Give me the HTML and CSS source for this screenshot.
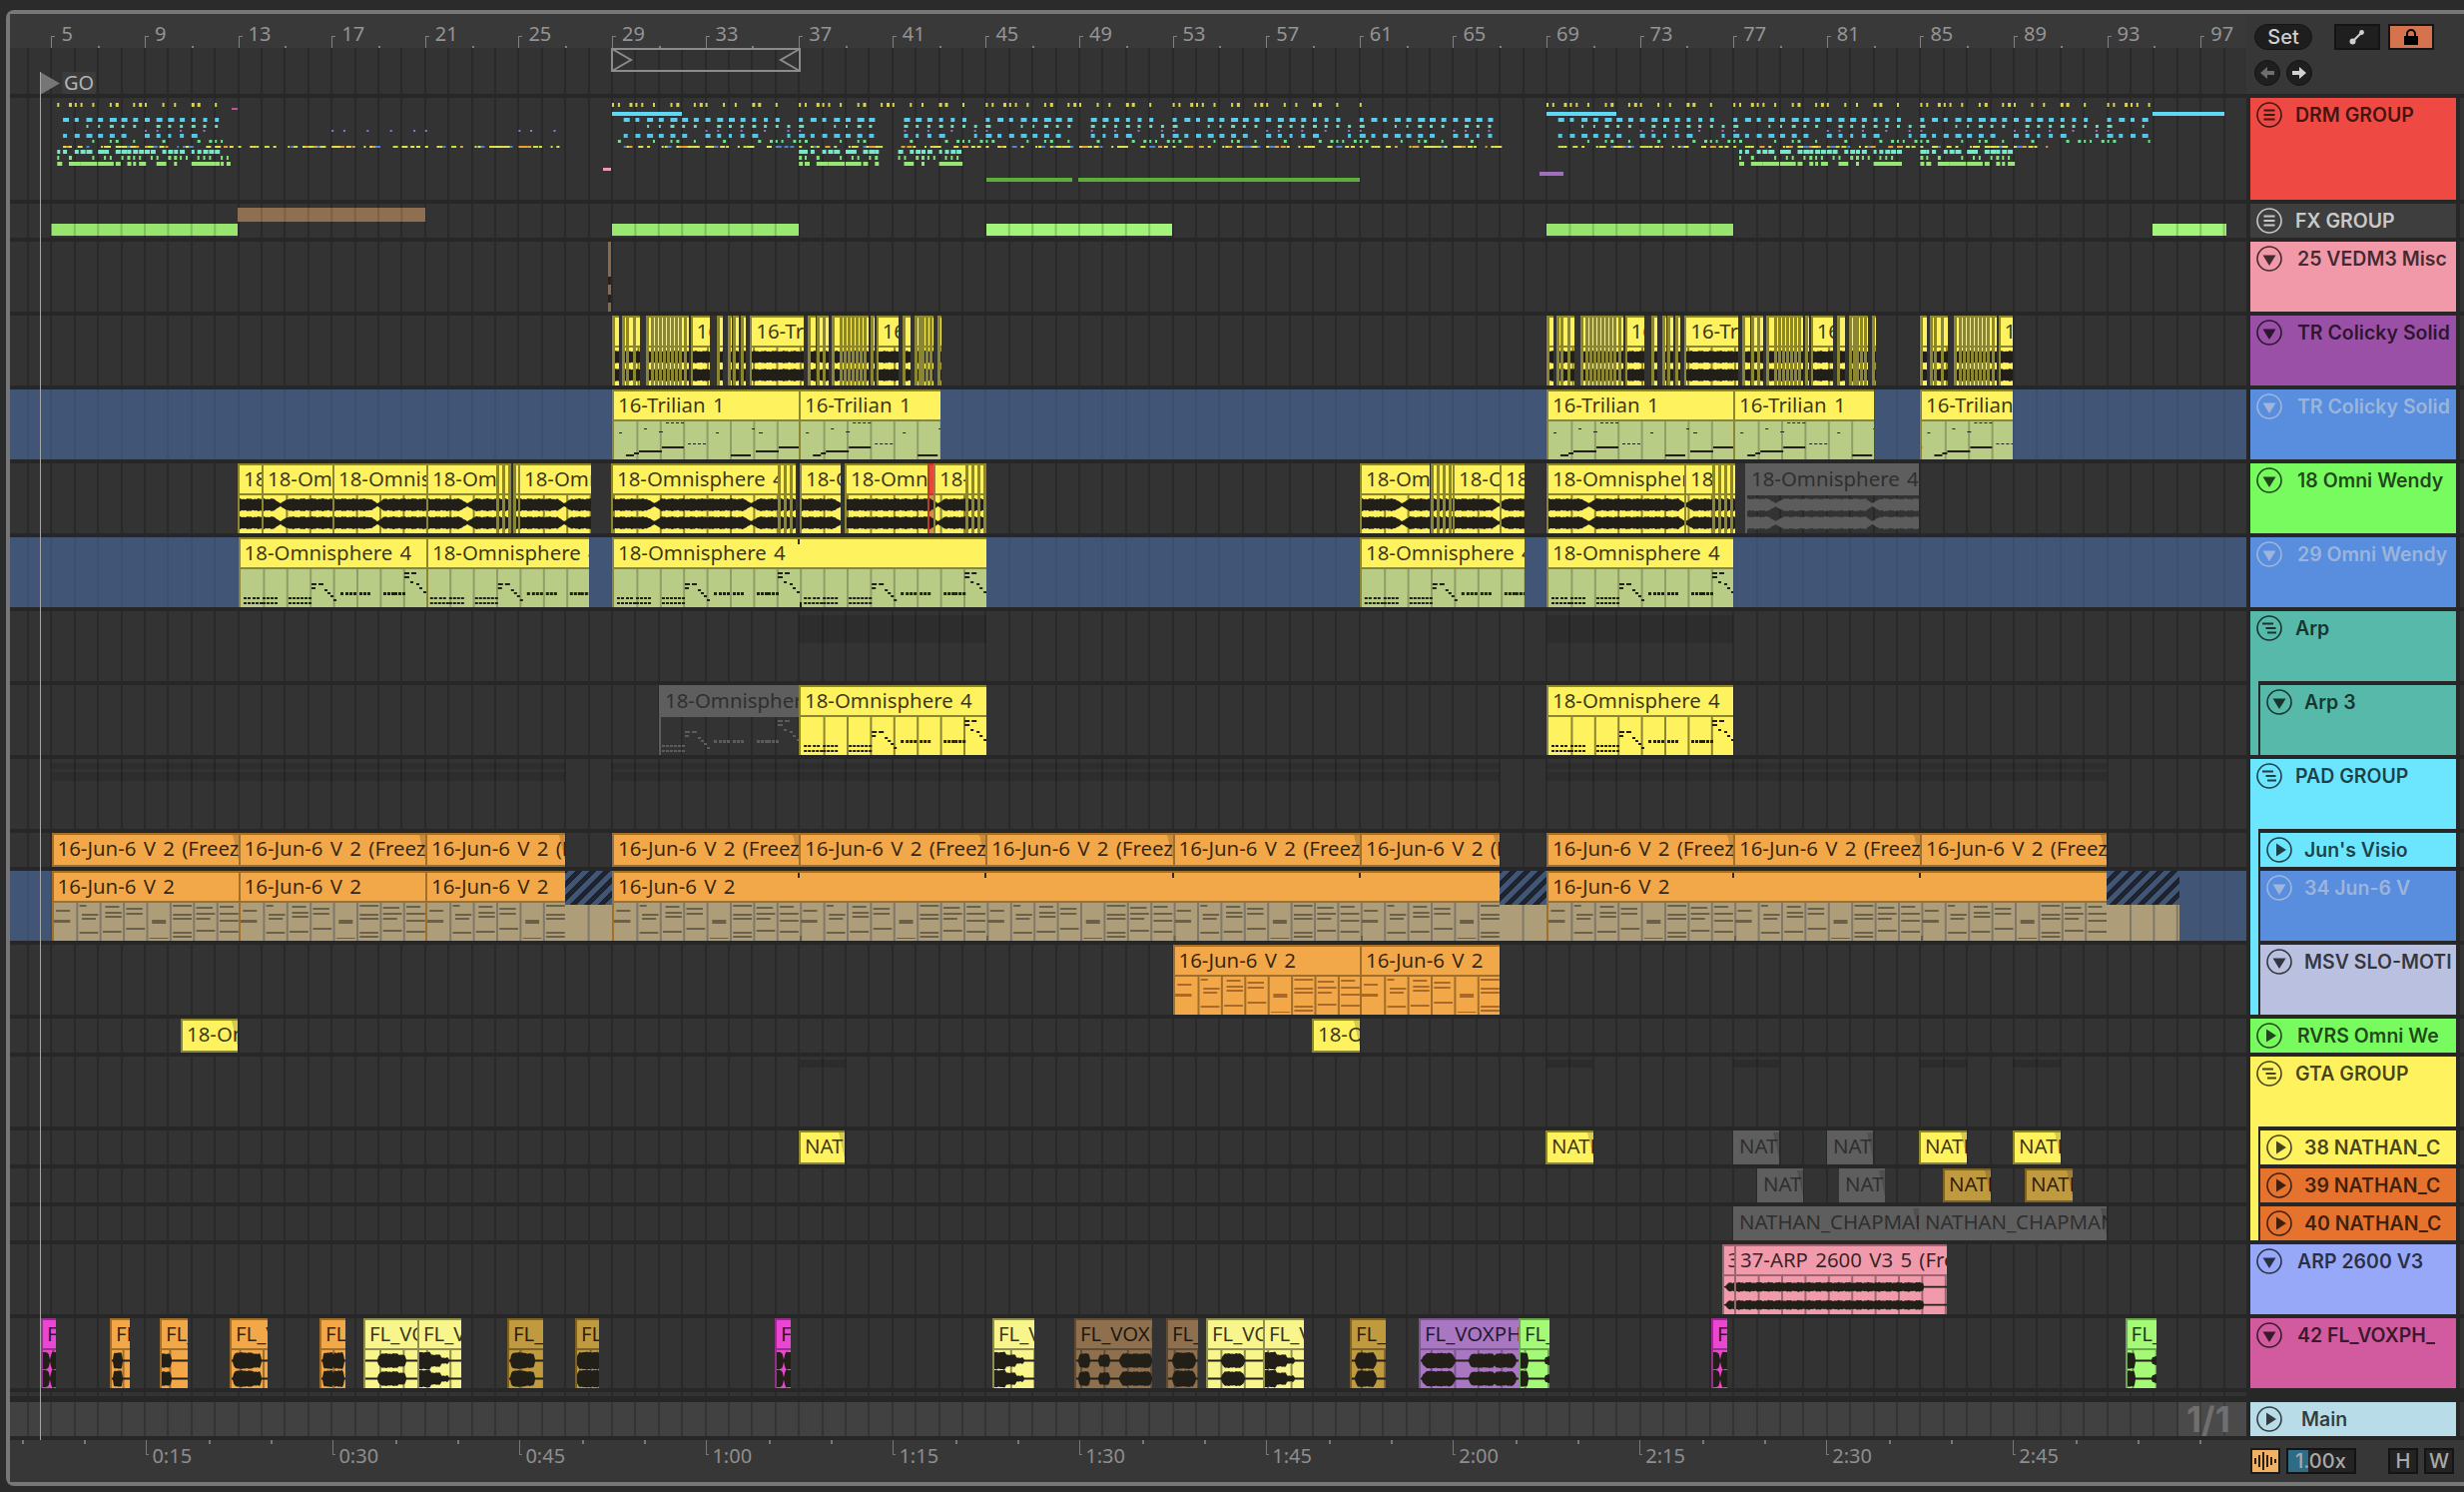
FILE: index.html
```html
<!DOCTYPE html>
<html lang="en">
<head>
<meta charset="utf-8">
<title>Arrangement</title>
<link rel="stylesheet" href="styles.css">
</head>
<body>
<svg class="defs" width="0" height="0" aria-hidden="true">
  <symbol id="i-group" viewBox="0 0 26 26"><circle cx="13" cy="13" r="12" fill="none" stroke="currentColor" stroke-width="1.6"/><path d="M7.5 8.5h11M7.5 13h11M7.5 17.5h11" stroke="currentColor" stroke-width="2" fill="none"/></symbol>
  <symbol id="i-tree" viewBox="0 0 26 26"><circle cx="13" cy="13" r="12" fill="none" stroke="currentColor" stroke-width="1.6"/><path d="M6 8.5h11M9.5 13h10M11 17.5h9" stroke="currentColor" stroke-width="2" fill="none"/></symbol>
  <symbol id="i-down" viewBox="0 0 26 26"><circle cx="13" cy="13" r="12" fill="none" stroke="currentColor" stroke-width="1.6"/><path d="M6.5 9.5h13L13 20z" fill="currentColor"/></symbol>
  <symbol id="i-right" viewBox="0 0 26 26"><circle cx="13" cy="13" r="12" fill="none" stroke="currentColor" stroke-width="1.6"/><path d="M10 6.5v13L20 13z" fill="currentColor"/></symbol>
</svg>

<div class="frame">
  <div class="top">
    <div class="top-left">
      <div class="ruler" id="ruler"></div>
      <div class="locators">
        <svg class="loop" width="190" height="24" viewBox="0 0 190 24"><path d="M1 1H189V23H1V1L20 12L1 23M189 1L170 12L189 23" fill="none" stroke="#8c8c8c" stroke-width="2"/></svg>
        <svg class="flag" width="20" height="23" viewBox="0 0 20 23"><path d="M0 0L20 11.5L0 23z" fill="#767676"/></svg>
        <span class="go">GO</span>
      </div>
    </div>
    <div class="controls">
      <div class="ctl-row">
        <span class="pill">Set</span>
        <span class="sq sq-first"><svg width="16" height="16" viewBox="0 0 16 16"><path d="M4 12L12 4" stroke="#cfcfcf" stroke-width="2.2"/><circle cx="3.5" cy="12.5" r="3" fill="#cfcfcf"/><circle cx="12.5" cy="3.5" r="2.4" fill="#cfcfcf"/></svg></span>
        <span class="sq sq-lock"><svg width="16" height="16" viewBox="0 0 16 16"><path d="M4 8V5a4 4 0 0 1 8 0v3" fill="none" stroke="#000" stroke-width="2"/><rect x="1" y="7" width="14" height="9" fill="#000"/></svg></span>
      </div>
      <div class="ctl-row ctl-nav">
        <span class="nav"><svg width="16" height="14" viewBox="0 0 16 14"><path d="M15 5H8V1L1 7l7 6V9h7z" fill="#6e6e6e"/></svg></span>
        <span class="nav"><svg width="16" height="14" viewBox="0 0 16 14"><path d="M1 5h7V1l7 6-7 6V9H1z" fill="#d2d2d2"/></svg></span>
      </div>
    </div>
  </div>

  <div class="tracks">
    <div class="track tall-xl"><div class="lane" data-t="drm"></div><div class="head h-red"><svg class="ico"><use href="#i-group"/></svg><span class="name grp">DRM GROUP</span></div><i class="strip"></i></div>
    <div class="track short"><div class="lane" data-t="fx"></div><div class="head h-dark"><svg class="ico"><use href="#i-group"/></svg><span class="name grp">FX GROUP</span></div><i class="strip"></i></div>
    <div class="track tall"><div class="lane" data-t="misc"></div><div class="head h-pink"><svg class="ico"><use href="#i-down"/></svg><span class="name">25 VEDM3 Misc</span></div><i class="strip"></i></div>
    <div class="track tall"><div class="lane" data-t="tr"></div><div class="head h-violet"><svg class="ico"><use href="#i-down"/></svg><span class="name">TR Colicky Solid</span></div><i class="strip"></i></div>
    <div class="track tall"><div class="lane blue" data-t="trm"></div><div class="head h-blue"><svg class="ico"><use href="#i-down"/></svg><span class="name">TR Colicky Solid</span></div><i class="strip"></i></div>
    <div class="track tall"><div class="lane" data-t="om"></div><div class="head h-lime"><svg class="ico"><use href="#i-down"/></svg><span class="name">18 Omni Wendy</span></div><i class="strip"></i></div>
    <div class="track tall"><div class="lane blue" data-t="omm"></div><div class="head h-blue"><svg class="ico"><use href="#i-down"/></svg><span class="name">29 Omni Wendy</span></div><i class="strip"></i></div>
    <div class="track tall"><div class="lane" data-t="arp"></div><div class="head h-teal"><svg class="ico"><use href="#i-tree"/></svg><span class="name grp">Arp</span></div><i class="strip"></i></div>
    <div class="track tall"><div class="lane" data-t="arp3"></div><div class="head h-teal child p-teal"><svg class="ico"><use href="#i-down"/></svg><span class="name grp">Arp 3</span></div><i class="strip"></i></div>
    <div class="track tall"><div class="lane" data-t="pad"></div><div class="head h-cyan"><svg class="ico"><use href="#i-tree"/></svg><span class="name grp">PAD GROUP</span></div><i class="strip"></i></div>
    <div class="track short"><div class="lane" data-t="jun"></div><div class="head h-cyan child p-cyan"><svg class="ico"><use href="#i-right"/></svg><span class="name">Jun's Visio</span></div><i class="strip"></i></div>
    <div class="track tall"><div class="lane blue" data-t="jun34"></div><div class="head h-blue child p-cyan"><svg class="ico"><use href="#i-down"/></svg><span class="name">34 Jun-6 V</span></div><i class="strip"></i></div>
    <div class="track tall"><div class="lane" data-t="msv"></div><div class="head h-lav child p-cyan"><svg class="ico"><use href="#i-down"/></svg><span class="name">MSV SLO-MOTI</span></div><i class="strip"></i></div>
    <div class="track short"><div class="lane" data-t="rvrs"></div><div class="head h-lime"><svg class="ico"><use href="#i-right"/></svg><span class="name">RVRS Omni We</span></div><i class="strip"></i></div>
    <div class="track tall"><div class="lane" data-t="gta"></div><div class="head h-yel"><svg class="ico"><use href="#i-tree"/></svg><span class="name grp">GTA GROUP</span></div><i class="strip"></i></div>
    <div class="track short"><div class="lane" data-t="n38"></div><div class="head h-yel child p-yel"><svg class="ico"><use href="#i-right"/></svg><span class="name">38 NATHAN_C</span></div><i class="strip"></i></div>
    <div class="track short"><div class="lane" data-t="n39"></div><div class="head h-org child p-yel"><svg class="ico"><use href="#i-right"/></svg><span class="name">39 NATHAN_C</span></div><i class="strip"></i></div>
    <div class="track short"><div class="lane" data-t="n40"></div><div class="head h-org child p-yel"><svg class="ico"><use href="#i-right"/></svg><span class="name">40 NATHAN_C</span></div><i class="strip"></i></div>
    <div class="track tall"><div class="lane" data-t="a26"></div><div class="head h-peri"><svg class="ico"><use href="#i-down"/></svg><span class="name">ARP 2600 V3</span></div><i class="strip"></i></div>
    <div class="track tall"><div class="lane" data-t="fl"></div><div class="head h-mag"><svg class="ico"><use href="#i-down"/></svg><span class="name">42 FL_VOXPH_</span></div><i class="strip"></i></div>
    <div class="track thin"><div class="lane"></div></div>
    <div class="track short main"><div class="lane lane-main"><span class="page">1/1</span></div><div class="head h-main"><svg class="ico"><use href="#i-right"/></svg><span class="name main-name">Main</span></div><i class="strip"></i></div>
  </div>

  <div class="bottom">
    <div class="time" id="time"></div>
    <div class="status">
      <span class="wavebtn"><svg width="24" height="20" viewBox="0 0 24 20"><path d="M2 7v6M6 4v12M10 1v18M14 4v12M18 6v8M22 8v4" stroke="#2a2013" stroke-width="2"/></svg></span>
      <span class="tempo"><span class="tempo-fill"></span><span class="tempo-text">1.00x</span></span>
      <span class="key key-h">H</span>
      <span class="key">W</span>
    </div>
  </div>
  <div class="startline"></div>
</div>
<script src="app.js"></script>
</body>
</html>
```

FILE: styles.css
```css
* { box-sizing: border-box; }
html, body { margin: 0; padding: 0; height: 100%; background: #2b2b2b; overflow: hidden; }
body { padding: 10px 0 0 6px; font-family: "Noto Sans", "Liberation Sans", sans-serif; }
.defs { position: absolute; }
.frame {
  position: relative; width: 2462px; height: 1478px;
  border: 4px solid #777; border-right: 0; border-radius: 8px 0 0 8px;
  background: #272727;
  --grid: repeating-linear-gradient(90deg, rgba(0,0,0,.2) 17px, rgba(0,0,0,.2) 19px, transparent 19px, transparent 40.4px);
}
.top { display: flex; height: 80px; background: #373737; margin-bottom: 4px; }
.top-left { width: 2240px; display: flex; flex-direction: column; }
.ruler { height: 34px; position: relative; background: #393939; overflow: hidden; }
.bar-no { position: absolute; top: 8px; font-size: 20px; line-height: 24px; color: #949494; }
.bar-tick { position: absolute; bottom: 0; width: 4px; height: 12px; border-left: 1px solid #808080; border-top: 1px solid #808080; }
.bar-dot { position: absolute; bottom: 0; width: 2px; height: 2px; background: #808080; }
.locators { position: relative; flex: 1; background-color: #333; background-image: var(--grid); }
.loop { position: absolute; left: 602px; top: 0; }
.flag { position: absolute; left: 30px; top: 24px; }
.go { position: absolute; left: 52px; top: 24px; padding: 0 2px; font-size: 20px; line-height: 22px; color: #b4b4b4; background: #3b3b3b; }
.controls { flex: 1; padding: 10px 0 0 8px; }
.ctl-row { display: flex; align-items: center; }
.ctl-nav { margin-top: 10px; gap: 6px; }
.pill { width: 58px; height: 26px; border-radius: 13px; background: #1e1e1e; border: 1px solid #141414; color: #cfcfcf; font: 500 20px/24px Inter, sans-serif; text-align: center; }
.sq { width: 46px; height: 26px; display: flex; align-items: center; justify-content: center; background: #1f1f1f; border: 2px solid #141414; }
.sq-first { margin-left: 22px; }
.sq-lock { margin-left: 8px; background: #d6734f; }
.nav { width: 26px; height: 26px; border-radius: 50%; background: #1f1f1f; border: 1px solid #141414; display: flex; align-items: center; justify-content: center; }

.tracks { display: flex; flex-direction: column; gap: 4px; }
.track { display: flex; gap: 4px; flex: none; }
.tall-xl { height: 102px; }
.tall { height: 70px; }
.short { height: 34px; }
.thin { height: 4px; margin-bottom: 2px; }
.lane { position: relative; width: 2240px; flex: none; overflow: hidden; background-color: #333; background-image: var(--grid); }
.lane.blue { background-color: #415676; background-image: repeating-linear-gradient(90deg, rgba(0,0,0,.07) 17px, rgba(0,0,0,.07) 19px, transparent 19px, transparent 40.4px); }
.lane-main { background-color: #414141; }
.page { position: absolute; right: 0; top: 0; width: 68px; padding-left: 8px; background: rgba(255,255,255,.05); font: 700 35px/34px Inter, sans-serif; color: #6f6f6f; }
.strip { width: 4px; flex: none; background: #333; }
.head { position: relative; width: 206px; flex: none; display: flex; align-items: flex-start; padding: 4px 0 0 6px; color: rgba(0,0,0,.72); }
.ico { width: 26px; height: 26px; flex: none; }
.name { margin-left: 15px; font: 600 19.5px/26px Inter, sans-serif; white-space: nowrap; overflow: hidden; }
.grp { margin-left: 13px; }
.h-red { background: #ee4a43; }
.h-dark { background: #3e3e3e; color: #c9c9c9; }
.h-pink { background: #f198a9; }
.h-violet { background: #9a50a7; }
.h-blue { background: #598edf; color: rgba(215,215,215,.55); }
.h-lime { background: #78fb5e; }
.h-teal { background: #56b9a9; }
.h-cyan { background: #6ce6ff; }
.h-lav { background: #b9c0e0; }
.h-yel { background: #fff25f; }
.h-org { background: #e5732d; }
.h-peri { background: #97a8f8; }
.h-mag { background: #d15b9e; }
.h-main { background: #b8dce8; }
.main-name { margin-left: 19px; }
.child { padding-left: 16px; border-left: 10px solid; background-clip: padding-box; }
.child .ico { margin-left: -10px; }
.child .name { margin-left: 12px; }
.child::before { content: ""; position: absolute; left: -10px; top: -4px; width: 8px; height: 4px; }
.child::after { content: ""; position: absolute; left: -2px; top: 0; bottom: 0; width: 2px; background: #272727; }
.p-teal { border-left-color: #56b9a9; }
.p-teal::before { background: #56b9a9; }
.p-cyan { border-left-color: #6ce6ff; }
.p-cyan::before { background: #6ce6ff; }
.p-yel { border-left-color: #fff25f; }
.p-yel::before { background: #fff25f; }

.bottom { display: flex; height: 42px; margin-top: 4px; background: #373737; }
.time { position: relative; width: 2240px; flex: none; overflow: hidden; }
.t-major { position: absolute; top: 0; width: 3px; height: 15px; border-left: 1px solid #777; border-bottom: 1px solid #777; }
.t-minor { position: absolute; top: 0; width: 2px; height: 4px; background: #777; }
.t-label { position: absolute; top: 4px; font-size: 20px; line-height: 24px; color: #8e8e8e; }
.status { flex: 1; display: flex; align-items: flex-start; padding: 8px 0 0 4px; }
.wavebtn { width: 30px; height: 26px; background: #f2b063; border: 2px solid #1b1b1b; display: flex; align-items: center; justify-content: center; }
.tempo { position: relative; width: 70px; height: 26px; margin-left: 6px; background: #232323; border: 2px solid #141414; }
.tempo-fill { position: absolute; left: 0; top: 0; bottom: 0; width: 20px; background: #2e6c86; }
.tempo-text { position: absolute; left: 7px; top: 0; font: 500 20px/22px Inter, sans-serif; color: #a9a9a9; }
.key { width: 30px; height: 26px; margin-left: 6px; background: #232323; border: 2px solid #141414; color: #a9a9a9; font: 500 20px/22px Inter, sans-serif; text-align: center; }
.key-h { margin-left: 32px; }
.startline { position: absolute; left: 30px; top: 58px; width: 1px; height: 1370px; background: #a6a6a6; }

/* clips */
.clip { position: absolute; top: 0; bottom: 0; overflow: hidden; border-left: 2px solid var(--e); --ln: var(--e); --ink: #211f18; }
.title { position: relative; height: 32px; background: var(--c); border-top: 2px solid var(--e); border-bottom: 2px solid var(--e); padding-left: 4px; font-size: 20.4px; word-spacing: 2px; line-height: 27px; color: rgba(0,0,0,.78); white-space: nowrap; overflow: hidden; }
.short .title { height: 34px; }
.short .title::after { content: ""; position: absolute; right: 0; top: 0; width: 7px; height: 100%; background: linear-gradient(to bottom left, rgba(0,0,0,.16) 0, rgba(0,0,0,.16) 42%, transparent 44%); }
.body { height: 38px; background: var(--b, var(--c)); }
.body svg { display: block; }
.tick { position: absolute; top: 0; width: 2px; height: 5px; background: #3a2a14; }
.ln { fill: var(--ln); }
.ink { fill: var(--ink); }
.c-yel { --c: #fff25f; --e: #8b8632; }
.c-thin { --c: #fff25f; --e: #8b8632; border-left-width: 3px; }
.c-org { --c: #f2a848; --e: #a06f2c; }
.c-gold { --c: #c09a3f; --e: #7c6228; }
.c-pale { --c: #f8f58c; --e: #8f8e52; }
.c-brown { --c: #8e704f; --e: #5f4c37; }
.c-purple { --c: #a976c2; --e: #7b5590; }
.c-green { --c: #a4fa76; --e: #6aa84e; }
.c-mag { --c: #ea46d2; --e: #95308a; }
.c-pink { --c: #f19aab; --e: #9e6470; }
.c-red { --c: #e8453c; --e: #c0392f; --b: #c8914a; }
.c-gray { --c: #5e5e5e; --e: #5e5e5e; --b: transparent; --ln: transparent; --ink: #5c5c5c; }
.c-gray .title { color: #2f2f2f; }
.b-green { --b: #b9cc85; --ln: #8f9e66; }
.b-tan { --b: #ad9e79; --ln: #80786a; --ink: #6b604a; }
.b-org { --ink: #a8692a; }
.hatch { position: absolute; top: 0; height: 34px; background: repeating-linear-gradient(-45deg, #3f5679 0 5px, #1d242f 5px 10px); }
.tan { position: absolute; top: 34px; height: 36px; background: #ad9e79; --ln: #80786a; }
.layer { position: absolute; left: 0; top: 0; display: block; }
```

FILE: app.js
```js
(function () {
  var OX = 10;
  function B(b) { return 613 + (b - 29) * 23.4; }
  function bars(x0, x1) {
    var out = [], k = Math.ceil((x0 - 613) / 23.4 - 1e-6);
    for (;; k++) { var x = 613 + k * 23.4; if (x > x1) break; out.push(x); }
    return out;
  }
  function rng(seed) { var s = seed; return function () { s = (s * 16807) % 2147483647; return s / 2147483647; }; }
  function rect(x, y, w, h, cls, fill) {
    return '<rect x="' + x.toFixed(1) + '" y="' + y.toFixed(1) + '" width="' + w.toFixed(1) + '" height="' + h.toFixed(1) + '"' + (cls ? ' class="' + cls + '"' : '') + (fill ? ' fill="' + fill + '"' : '') + '/>';
  }
  function lanes(name) { return document.querySelector('[data-t="' + name + '"]'); }

  /* waveform */
  function wavePath(w, c, amp) {
    var up = [], dn = [];
    for (var x = 0; x <= w; x++) { var a = amp(x); up.push(x + ' ' + (c - a).toFixed(1)); dn.unshift(x + ' ' + (c + a).toFixed(1)); }
    return '<path class="ink" d="M' + up.join('L') + 'L' + dn.join('L') + 'Z"/>';
  }
  function jit(x, s) { return Math.sin(x * 1.7 + s) * 0.35 + Math.sin(x * 0.63 + s * 2) * 0.35; }
  function bump(x, blobs) {
    var best = 0.9;
    blobs.forEach(function (b) {
      var d = Math.abs(x - b[0]);
      if (d < b[1]) { var v = b[2] * Math.sqrt(Math.min(1, (1 - d / b[1]) * 3.5)); if (v > best) best = v; }
    });
    return best;
  }
  var OMNI = [[3,28,7,2],[12,28,8,2],[22,28,14,2],[3,33,17,2],[22,33,14,2],[48,28,22,2],[48,33,22,2],[71,14,5,2],[78,14,5,2],[71,18,4,2],[84,20,3,2],[87,23,3,2],[90,26,3,2],[93,30,3,2],[100,23,3,3],[105,23,12,3],[119,23,11,3],[143,23,9,3],[154,23,11,3],[164,3,5,2],[171,3,5,2],[164,7,5,2],[170,12,3,2],[176,14,3,2],[179,18,3,2],[183,22,3,2]];
  var TRIL = [[5,11,3,1],[30,7,3,1],[45,10,4,1],[52,1,3,1],[57,1,3,1],[62,1,3,1],[67,1,3,1],[12,33,8,2],[20,31,5,2],[25,29,23,2],[48,25,22,2],[74,22,3,1],[79,22,3,1],[84,22,3,1],[89,22,3,1],[102,11,3,1],[138,7,3,1],[145,11,4,1],[117,33,20,2],[142,29,23,2],[165,25,22,2]];
  var JUN = [
    [[7,.1,.7,2],[17,0,.7,3]],
    [[2,.1,.4,2],[11,.2,.9,2],[15,.2,.8,2],[29,.1,.9,2]],
    [[3,.2,.8,2],[9,.2,.9,2],[13,.2,.9,2],[28,.1,.9,2]],
    [[5,.1,.8,2],[10,.1,.8,2],[25,.1,.9,2]],
    [[17,.2,.8,4],[35,.1,.9,1]],
    [[2,.1,.9,2],[11,.1,.9,2],[15,.1,.9,2],[29,.1,.9,2],[33,.1,.9,2]],
    [[4,.1,.8,2],[10,.1,.9,2],[15,.1,.7,2],[27,.1,.9,2]],
    [[3,.1,.7,2],[10,.1,.9,2],[17,.1,.9,2],[28,.1,.9,2]]
  ];
  function tile(x0, x1, arr, origin, out, dash) {
    var P = 187.2, w = x1 - x0;
    var k0 = Math.floor((x0 - origin) / P);
    for (var k = k0; origin + k * P < x1; k++) {
      arr.forEach(function (r) {
        var rx = origin + k * P + r[0] - x0;
        if (rx + r[2] <= 0 || rx >= w) return;
        if (dash && r[2] > 5) {
          for (var q = 0; q < r[2]; q += 4) out.push(rect(rx + q, r[1], 3, r[3], 'ink'));
        } else {
          out.push(rect(rx, r[1], r[2], r[3], 'ink'));
        }
      });
    }
  }
  function bodySvg(x0, x1, o) {
    var w = x1 - x0, s = [];
    bars(x0 + 1, x1).forEach(function (x) { s.push(rect(x - x0 - 1, 0, 2, 38, 'ln')); });
    if (o.wave === 'omni') {
      var ampO = function (x) {
        var p = ((x + x0 - 238) % 187.2 + 187.2) % 187.2;
        var d = Math.min(Math.abs(p - 41), Math.abs(p - 138));
        var a = 5.9 + jit(x, 1);
        if (d < 7) a = 1.5 + (a - 1.5) * d / 7;
        return a;
      };
      s.push(wavePath(w, 9.5, ampO), wavePath(w, 27.5, ampO));
    } else if (o.wave === 'tri') {
      var ampT = function (x) { return 5.8 + jit(x + x0, 2) * 0.9; };
      s.push(wavePath(w, 9.5, ampT), wavePath(w, 27.5, ampT));
    } else if (o.wave === 'arp') {
      var ampA = function (x) {
        var X = x + x0;
        if (X < 1729) return Math.max(0.6, (X - 1725) * 1.1);
        return X < 1925 ? 4.4 + jit(x, 3) * 0.9 : 0.9;
      };
      s.push(wavePath(w, 10.7, ampA), wavePath(w, 28.7, ampA));
    } else if (o.blobs) {
      var ampF = function (x) { var v = bump(x, o.blobs); return v + (v > 1 ? jit(x, 4) * 0.7 : 0); };
      s.push(wavePath(w, 10.5, ampF), wavePath(w, 28.5, ampF));
    }
    if (o.midi === 'omni') tile(x0, x1, OMNI, 238.6, s, true);
    if (o.midi === 'tri') tile(x0, x1, TRIL, 613, s);
    if (o.midi === 'jun') {
      bars(x0 - 24, x1).forEach(function (bx) {
        var k = Math.round((bx - 51.4) / 23.4);
        JUN[((k % 8) + 8) % 8].forEach(function (l) {
          var a = Math.max(bx + l[1] * 23.4, x0) - x0, e = Math.min(bx + l[2] * 23.4, x1) - x0;
          if (e > a) s.push(rect(a, l[0], e - a, l[3], 'ink'));
        });
      });
    }
    (o.ticks || []).forEach(function (t) { s.push(rect(t - x0 - 1, 33, 2, 5, 'ink')); });
    return '<svg width="' + w.toFixed(1) + '" height="38" viewBox="0 0 ' + w.toFixed(1) + ' 38">' + s.join('') + '</svg>';
  }
  function clip(lane, x0, x1, label, color, o) {
    o = o || {};
    var d = document.createElement('div');
    d.className = 'clip ' + color + (o.bodyCls ? ' ' + o.bodyCls : '');
    d.style.left = (x0 - OX).toFixed(1) + 'px';
    d.style.width = (x1 - x0).toFixed(1) + 'px';
    var t = document.createElement('div');
    t.className = 'title';
    if (label) t.textContent = label;
    (o.ticks || []).forEach(function (x) {
      var k = document.createElement('span');
      k.className = 'tick';
      k.style.left = (x - x0 - 3).toFixed(1) + 'px';
      t.appendChild(k);
    });
    d.appendChild(t);
    if (!o.short) {
      var b = document.createElement('div');
      b.className = 'body';
      b.innerHTML = bodySvg(x0, x1, o);
      d.appendChild(b);
    }
    lane.appendChild(d);
  }
  function layer(lane, inner, h) {
    lane.insertAdjacentHTML('beforeend', '<svg class="layer" width="2240" height="' + h + '" viewBox="0 0 2240 ' + h + '">' + inner + '</svg>');
  }

  /* ruler */
  var rul = document.getElementById('ruler'), html = '';
  for (var n = 5; n <= 97; n += 4) {
    var x = B(n) - OX;
    html += '<span class="bar-tick" style="left:' + x.toFixed(1) + 'px"></span><span class="bar-no" style="left:' + (x + 10).toFixed(1) + 'px">' + n + '</span>';
    html += '<span class="bar-dot" style="left:' + (x + 46.8).toFixed(1) + 'px"></span>';
  }
  rul.innerHTML = html;

  /* time ruler */
  var tm = document.getElementById('time'), th = '';
  var labels = ['0:15','0:30','0:45','1:00','1:15','1:30','1:45','2:00','2:15','2:30','2:45'];
  for (var i = -2; i * 62.33 + 146.4 < 2250; i++) {
    var tx = i * 62.33 + 146.4 - OX;
    if (i >= 0 && i % 3 === 0 && labels[i / 3]) {
      th += '<span class="t-major" style="left:' + tx.toFixed(1) + 'px"></span><span class="t-label" style="left:' + (tx + 6).toFixed(1) + 'px">' + labels[i / 3] + '</span>';
    } else {
      th += '<span class="t-minor" style="left:' + tx.toFixed(1) + 'px"></span>';
    }
  }
  tm.innerHTML = th;

  /* DRM notes */
  function makeTile(N, seed, prob, wmin, wmax) {
    var r = rng(seed), t = [];
    for (var i = 0; i < N; i++) { var on = r() < prob; t.push(on ? wmin + r() * (wmax - wmin) : 0); }
    return t;
  }
  function noteRow(out, ranges, y, h, step, N, seed, prob, wmin, wmax, colors) {
    var t = makeTile(N, seed, prob, wmin, wmax), rc = rng(seed + 7);
    ranges.forEach(function (rg) {
      var i0 = Math.ceil((rg[0] - 613) / step), i1 = Math.floor((rg[1] - 613) / step);
      for (var i = i0; i <= i1; i++) {
        var w = t[((i % N) + N) % N];
        if (!w) continue;
        var c = colors[Math.floor(rc() * colors.length)];
        out.push(rect(613 + i * step - OX, y - 98, Math.round(w), h, '', c));
      }
    });
  }
  var mainR = [[58,226],[618,880],[900,1070],[1085,1500],[1555,2157]];
  var lowR = [[52,232],[800,880],[896,962],[1737,1900],[1923,2016]];
  var drm = [];
  noteRow(drm, [[52,222],[613,1362],[1549,2157]], 103, 4, 5.85, 32, 11, .55, 2, 3, ['#d9d24f']);
  noteRow(drm, mainR, 118, 4, 11.7, 16, 23, .92, 4, 7, ['#58cfee']);
  noteRow(drm, mainR, 125, 3, 11.7, 16, 37, .85, 2, 5, ['#62e2b4']);
  noteRow(drm, mainR.concat([[239,565]]), 130, 2, 11.7, 16, 41, .4, 2, 2, ['#a96cc8']);
  noteRow(drm, mainR, 134, 4, 11.7, 16, 53, .8, 3, 6, ['#52c6e8']);
  noteRow(drm, mainR, 140, 3, 5.85, 32, 61, .32, 2, 3, ['#6fe08f']);
  noteRow(drm, [[58,560],[618,880],[900,1500],[1555,2050]], 146, 2, 2.925, 64, 71, .55, 2, 6, ['#e4dc48','#e9a030','#c8e040','#4a86d0','#e4dc48','#d0e85a']);
  noteRow(drm, lowR, 150, 4, 5.85, 32, 83, .75, 3, 6, ['#78e6c8']);
  noteRow(drm, lowR, 156, 4, 5.85, 32, 97, .6, 2, 3, ['#82e27c']);
  noteRow(drm, lowR, 162, 4, 5.85, 32, 101, .8, 3, 8, ['#93e874']);
  [[232,108,6,2,'#c050a0'],[604,168,8,3,'#f09aab'],[613,112,70,4,'#5fd8f5'],[1549,112,70,4,'#5fd8f5'],[2156,112,72,4,'#5fd8f5'],
   [988,178,86,4,'#5cad3c'],[1080,178,282,4,'#5cad3c'],[1542,172,24,4,'#a070c0']].forEach(function (r) {
    drm.push(rect(r[0] - OX, r[1] - 98, r[2], r[3], '', r[4]));
  });
  layer(lanes('drm'), drm.join(''), 102);

  /* FX bars */
  var fx = [];
  function fxBar(x0, x1, y, h, c, l) {
    fx.push(rect(x0 - OX, y - 204, x1 - x0, h, '', c));
    bars(x0 + 2, x1 - 2).forEach(function (b) { fx.push(rect(b - OX - 1, y - 204, 2, h, '', l)); });
  }
  fxBar(51.5, 238, 224, 12, '#97e56f', '#7fbf5e');
  fxBar(238, 426, 208, 14, '#8e6f4f', '#7d6146');
  fxBar(613, 800, 224, 12, '#99e872', '#7fbf5e');
  fxBar(988, 1174, 224, 12, '#a2f47a', '#84c864');
  fxBar(1549, 1736, 224, 12, '#97e56f', '#7fbf5e');
  fxBar(2156, 2230, 224, 12, '#a2f47a', '#84c864');
  layer(lanes('fx'), fx.join(''), 34);

  /* misc */
  layer(lanes('misc'), rect(609 - OX, 0, 3, 70, '', '#8a6a4a') + rect(609 - OX, 35, 3, 8, '', '#2a2218') + rect(609 - OX, 53, 3, 8, '', '#2a2218'), 70);

  /* TR stripes */
  var TR = [[24,38],[44,52],[52,66],[66,80],[92,102],[102,110],[110,118],[118,126],[126,134],[134,142],[142,150],[150,158],[158,168],[168,178],[182,222],[234,246],[258,266],[268,280],[284,294],[302,410],[418,434],[436,448],[448,460],[466,482],[482,490],[490,498],[498,506],[506,514],[514,522],[522,530],[530,540],[544,552],[556,600],[608,624],[632,640],[640,648],[648,656],[656,664],[664,672],[680,688]];
  var tr = lanes('tr');
  function trRun(start, limit) {
    TR.forEach(function (p) {
      var a = (p[0] - 24) / 2.01, e = (p[1] - 24) / 2.01;
      if (a >= limit) return;
      e = Math.min(e, limit);
      clip(tr, start + a, start + e, e - a > 14 ? '16-Trilian 1' : '', e - a > 14 ? 'c-yel' : 'c-thin', { wave: 'tri' });
    });
  }
  trRun(613, 999); trRun(1549, 999); trRun(1923, 93);

  var trm = lanes('trm');
  [[613,800],[800,942],[1549,1736],[1736,1877],[1923,2016]].forEach(function (c) {
    clip(trm, c[0], c[1], '16-Trilian 1', 'c-yel', { midi: 'tri', bodyCls: 'b-green' });
  });

  /* Omni */
  var om = lanes('om');
  function strips(x0, x1) { for (var x = x0; x < x1 - 1; x += 6) clip(om, x, Math.min(x + 6, x1), '', 'c-thin', { wave: 'omni' }); }
  [[238,262],[262,333],[333,427],[427,497],[519,592],[612,778.5],[801,842],[846,929],[935,967],[1362,1432],[1455,1502],[1502,1527],[1549,1687],[1687,1715]].forEach(function (c) {
    clip(om, c[0], c[1], '18-Omnisphere 4', 'c-yel', { wave: 'omni' });
  });
  strips(497, 512); strips(514, 519); strips(778.5, 797); strips(967, 988); strips(1433, 1455); strips(1715, 1738);
  clip(om, 929, 935, '', 'c-red', { wave: 'omni' });
  clip(om, 1748, 1922, '18-Omnisphere 4', 'c-gray', { wave: 'omni' });

  var omm = lanes('omm');
  clip(omm, 238.6, 427, '18-Omnisphere 4', 'c-yel', { midi: 'omni', bodyCls: 'b-green' });
  clip(omm, 427, 590, '18-Omnisphere 4', 'c-yel', { midi: 'omni', bodyCls: 'b-green' });
  clip(omm, 613, 988, '18-Omnisphere 4', 'c-yel', { midi: 'omni', bodyCls: 'b-green', ticks: [800] });
  clip(omm, 1362, 1527, '18-Omnisphere 4', 'c-yel', { midi: 'omni', bodyCls: 'b-green' });
  clip(omm, 1549, 1736, '18-Omnisphere 4', 'c-yel', { midi: 'omni', bodyCls: 'b-green' });

  /* Dim bands */
  layer(lanes('arp'), rect(800 - OX, 4, 188, 28, '', 'rgba(0,0,0,.1)') + rect(1549 - OX, 4, 187, 28, '', 'rgba(0,0,0,.1)'), 70);
  layer(lanes('pad'), [[52,566],[612,1502],[1549,2110]].map(function (r) {
    return rect(r[0] - OX, 4, r[1] - r[0], 6, '', 'rgba(0,0,0,.1)') + rect(r[0] - OX, 13, r[1] - r[0], 9, '', 'rgba(0,0,0,.1)');
  }).join(''), 70);
  layer(lanes('gta'), [[801,847],[1549,1595],[1736,1782],[1923,1970],[2016,2064]].map(function (r) {
    return rect(r[0] - OX, 3, r[1] - r[0], 8, '', 'rgba(0,0,0,.12)');
  }).join(''), 70);

  /* Arp 3 */
  var a3 = lanes('arp3');
  clip(a3, 660, 800, '18-Omnisphere 4', 'c-gray', { midi: 'omni' });
  clip(a3, 800, 988, '18-Omnisphere 4', 'c-yel', { midi: 'omni' });
  clip(a3, 1549, 1736, '18-Omnisphere 4', 'c-yel', { midi: 'omni' });

  /* Jun freeze row */
  var jun = lanes('jun'), FZ = '16-Jun-6 V 2 (Freeze)';
  [[51.5,238.6],[238.6,426],[426,566],[613,800],[800,987],[987,1174.5],[1174.5,1362],[1362,1502],[1549,1736],[1736,1923],[1923,2110]].forEach(function (c) {
    clip(jun, c[0], c[1], FZ, 'c-org', { short: 1 });
  });

  /* 34 Jun */
  var j34 = lanes('jun34'), JN = '16-Jun-6 V 2';
  clip(j34, 51.5, 238.6, JN, 'c-org', { midi: 'jun', bodyCls: 'b-tan' });
  clip(j34, 238.6, 426, JN, 'c-org', { midi: 'jun', bodyCls: 'b-tan' });
  clip(j34, 426, 566, JN, 'c-org', { midi: 'jun', bodyCls: 'b-tan' });
  clip(j34, 613, 1502, JN, 'c-org', { midi: 'jun', bodyCls: 'b-tan', ticks: [800,987,1174.5,1362] });
  clip(j34, 1549, 2110, JN, 'c-org', { midi: 'jun', bodyCls: 'b-tan', ticks: [1736,1923] });
  [[566,613],[1502,1549],[2110,2183]].forEach(function (r) {
    var h = document.createElement('div'); h.className = 'hatch';
    h.style.left = (r[0] - OX) + 'px'; h.style.width = (r[1] - r[0]) + 'px';
    j34.appendChild(h);
    var t = document.createElement('div'); t.className = 'tan';
    t.style.left = (r[0] - OX) + 'px'; t.style.width = (r[1] - r[0]) + 'px';
    t.innerHTML = '<svg width="' + (r[1] - r[0]) + '" height="36">' + bars(r[0] + 1, r[1] - 1).map(function (x) { return rect(x - r[0] - 1, 0, 2, 36, 'ln'); }).join('') + '</svg>';
    j34.appendChild(t);
  });

  /* MSV */
  var msv = lanes('msv');
  clip(msv, 1174.5, 1362, JN, 'c-org', { midi: 'jun', bodyCls: 'b-org' });
  clip(msv, 1362, 1502, JN, 'c-org', { midi: 'jun', bodyCls: 'b-org' });

  /* RVRS */
  var rv = lanes('rvrs');
  clip(rv, 181, 238, '18-Omnisphere 4', 'c-yel', { short: 1 });
  clip(rv, 1314, 1362, '18-Omnisphere 4', 'c-yel', { short: 1 });

  /* NATHAN */
  var N = 'NATHAN_CHAPMAN', s1 = { short: 1 };
  var n38 = lanes('n38'), n39 = lanes('n39'), n40 = lanes('n40');
  clip(n38, 800, 846, N, 'c-yel', s1); clip(n38, 1548, 1596, N, 'c-yel', s1);
  clip(n38, 1736, 1782, N, 'c-gray', s1); clip(n38, 1830, 1876, N, 'c-gray', s1);
  clip(n38, 1922, 1970, N, 'c-yel', s1); clip(n38, 2016, 2064, N, 'c-yel', s1);
  clip(n39, 1760, 1806, N, 'c-gray', s1); clip(n39, 1842, 1888, N, 'c-gray', s1);
  clip(n39, 1946, 1994, N, 'c-gold', s1); clip(n39, 2028, 2076, N, 'c-gold', s1);
  clip(n40, 1736, 1922, N, 'c-gray', s1); clip(n40, 1922, 2110, N, 'c-gray', s1);

  /* ARP 2600 */
  var a26 = lanes('a26');
  clip(a26, 1724.5, 1737, '37-ARP 2600 V3 5 (Freeze)', 'c-pink', { wave: 'arp' });
  clip(a26, 1737, 1950, '37-ARP 2600 V3 5 (Freeze)', 'c-pink', { wave: 'arp' });

  /* FL */
  var fl = lanes('fl'), V = 'FL_VOXPHONE';
  var bow = [[-1,8,8.5],[15,8,8.5]];
  var decay = [[5,8,8.5],[14,9,6],[24,6,3]];
  [
    [41,56,'c-mag',bow],[110,130,'c-org',[[6,5,8]]],[160,188,'c-org',[[3,7,7]]],[230,268,'c-org',[[12,11,8],[24,6,7]]],
    [320,346,'c-org',[[7,6,8],[17,6,8]]],[364,418,'c-pale',[[24,12,7],[32,9,6]]],[418,462,'c-pale',decay],
    [508,544,'c-gold',[[10,9,8],[20,6,7]]],[576,600,'c-gold',[[12,13,8.5]]],[776,792,'c-mag',bow],
    [994,1036,'c-pale',decay],[1076,1154,'c-brown',[[8,6,7],[28,6,6],[56,13,7],[68,8,7]]],[1168,1200,'c-brown',[[16,12,8]]],
    [1208,1265,'c-pale',[[25,12,7]]],[1265,1306,'c-pale',decay],[1352,1388,'c-gold',[[14,11,8]]],
    [1421,1521,'c-purple',[[18,17,7.5],[62,14,7],[84,12,7]]],[1521,1552,'c-green',[[3,5,8],[28,4,4]]],
    [1714,1730,'c-mag',bow],[2128.6,2160,'c-green',[[3,5,8],[28,4,4]]]
  ].forEach(function (c) { clip(fl, c[0], c[1], V, c[2], { blobs: c[3] }); });
})();
```
